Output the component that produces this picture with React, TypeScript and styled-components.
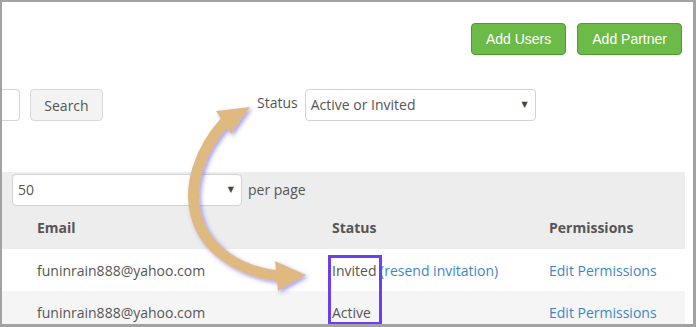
import React from "react";
import styled, { createGlobalStyle } from "styled-components";

const Global = createGlobalStyle`
  html, body { margin: 0; padding: 0; background: #fff; }
  body { font-family: "Open Sans", "Liberation Sans", sans-serif; font-size: 14px; color: #555; }
  * { box-sizing: border-box; }
`;

const Frame = styled.div`
  position: relative;
  width: 696px;
  height: 327px;
  border-style: solid;
  border-color: #a2a2a2;
  border-width: 2px 3px 3px 2px;
  overflow: hidden;
  background: #fff;
`;

const Toolbar = styled.div`
  display: flex;
  justify-content: flex-end;
  gap: 11px;
  padding: 21px 11px 0 0;
  height: 87px;
`;

const GreenButton = styled.button`
  height: 32px;
  padding: 0 14px;
  border: 1px solid #4f9b30;
  border-radius: 4px;
  background: #6cba47;
  color: #fff;
  font-family: "Liberation Sans", Arial, sans-serif;
  font-size: 14px;
  cursor: pointer;
`;

const FilterRow = styled.div`
  display: flex;
  align-items: flex-start;
  height: 83px;
`;

const SearchInput = styled.div`
  width: 18px;
  height: 32px;
  border: 1px solid #d4d4d4;
  border-left: none;
  border-radius: 0 4px 4px 0;
  background: #fff;
`;

const GrayButton = styled.button`
  margin-left: 10px;
  width: 73px;
  height: 32px;
  border: 1px solid #d8d8d8;
  border-radius: 4px;
  background: #f3f3f3;
  color: #555;
  font-family: "Open Sans", sans-serif;
  font-size: 14px;
  padding: 0;
`;

const StatusGroup = styled.div`
  display: flex;
  align-items: flex-start;
  margin-left: 154px;
  gap: 7px;
`;

const Label = styled.span`
  font-size: 14px;
  line-height: 28px;
  color: #555;
`;

const Select = styled.div<{ $w: number }>`
  position: relative;
  width: ${(p) => p.$w}px;
  height: 32px;
  border: 1px solid #d2d2d2;
  border-radius: 4px;
  background: #fff;
  padding-left: 5px;
  font-size: 14px;
  line-height: 30px;
  color: #555;
  display: flex;
  align-items: center;
  justify-content: space-between;
  padding-right: 7px;
`;

const Caret = styled.span`
  font-size: 8px;
  color: #444;
  font-family: "DejaVu Sans", sans-serif;
`;

const Band = styled.div`
  margin-right: 8px;
  background: #ededed;
  padding: 2px 0 0 10px;
`;

const PerPage = styled.div`
  display: flex;
  align-items: center;
  gap: 6px;
`;

const Grid = styled.div<{ $bg?: string; $h: number }>`
  display: grid;
  grid-template-columns: 295px 217px 1fr;
  align-items: center;
  height: ${(p) => p.$h}px;
  padding-left: 35px;
  margin-right: 8px;
  background: ${(p) => p.$bg || "transparent"};
`;

const HeadCell = styled.div`
  font-weight: 700;
  color: #555;
  font-size: 14px;
`;

const Cell = styled.div`
  font-size: 14px;
  color: #555;
  white-space: nowrap;
`;

const Link = styled.span`
  color: #3b87c6;
`;

const Overlay = styled.svg`
  position: absolute;
  left: -2px;
  top: -2px;
  pointer-events: none;
`;

const Highlight = styled.div`
  position: absolute;
  left: 326px;
  top: 253px;
  width: 54px;
  height: 70px;
  border: 3px solid #6c3df2;
  pointer-events: none;
`;

export default function App() {
  return (
    <>
      <Global />
      <Frame>
        <Toolbar>
          <GreenButton>Add Users</GreenButton>
          <GreenButton>Add Partner</GreenButton>
        </Toolbar>
        <FilterRow>
          <SearchInput />
          <GrayButton>Search</GrayButton>
          <StatusGroup>
            <Label>Status</Label>
            <Select $w={231}>
              <span>Active or Invited</span>
              <Caret>▼</Caret>
            </Select>
          </StatusGroup>
        </FilterRow>
        <Band>
          <PerPage>
            <Select $w={230}>
              <span>50</span>
              <Caret>▼</Caret>
            </Select>
            <Label>per page</Label>
          </PerPage>
        </Band>
        <Grid $bg="#ededed" $h={43}>
          <HeadCell>Email</HeadCell>
          <HeadCell>Status</HeadCell>
          <HeadCell>Permissions</HeadCell>
        </Grid>
        <Grid $h={42}>
          <Cell>funinrain888@yahoo.com</Cell>
          <Cell>
            Invited <Link>(resend invitation)</Link>
          </Cell>
          <Cell>
            <Link>Edit Permissions</Link>
          </Cell>
        </Grid>
        <Grid $bg="#f5f5f5" $h={42}>
          <Cell>funinrain888@yahoo.com</Cell>
          <Cell>Active</Cell>
          <Cell>
            <Link>Edit Permissions</Link>
          </Cell>
        </Grid>
        <Highlight />
        <Overlay width={696} height={327} viewBox="0 0 696 327">
          <defs>
            <filter id="sh" x="-20%" y="-20%" width="140%" height="140%">
              <feDropShadow dx="2" dy="2" stdDeviation="2" floodColor="#5a4cf0" floodOpacity="0.55" />
            </filter>
          </defs>
          <g filter="url(#sh)" fill="#dfba80">
            <path
              d="M225,122 C200,150 188,185 196,215 C205,250 240,272 279,276"
              fill="none"
              stroke="#dfba80"
              strokeWidth={11}
            />
            <polygon points="250,107 216,111 231,134" />
            <polygon points="306,275 275,261 278,291" />
          </g>
        </Overlay>
      </Frame>
    </>
  );
}
